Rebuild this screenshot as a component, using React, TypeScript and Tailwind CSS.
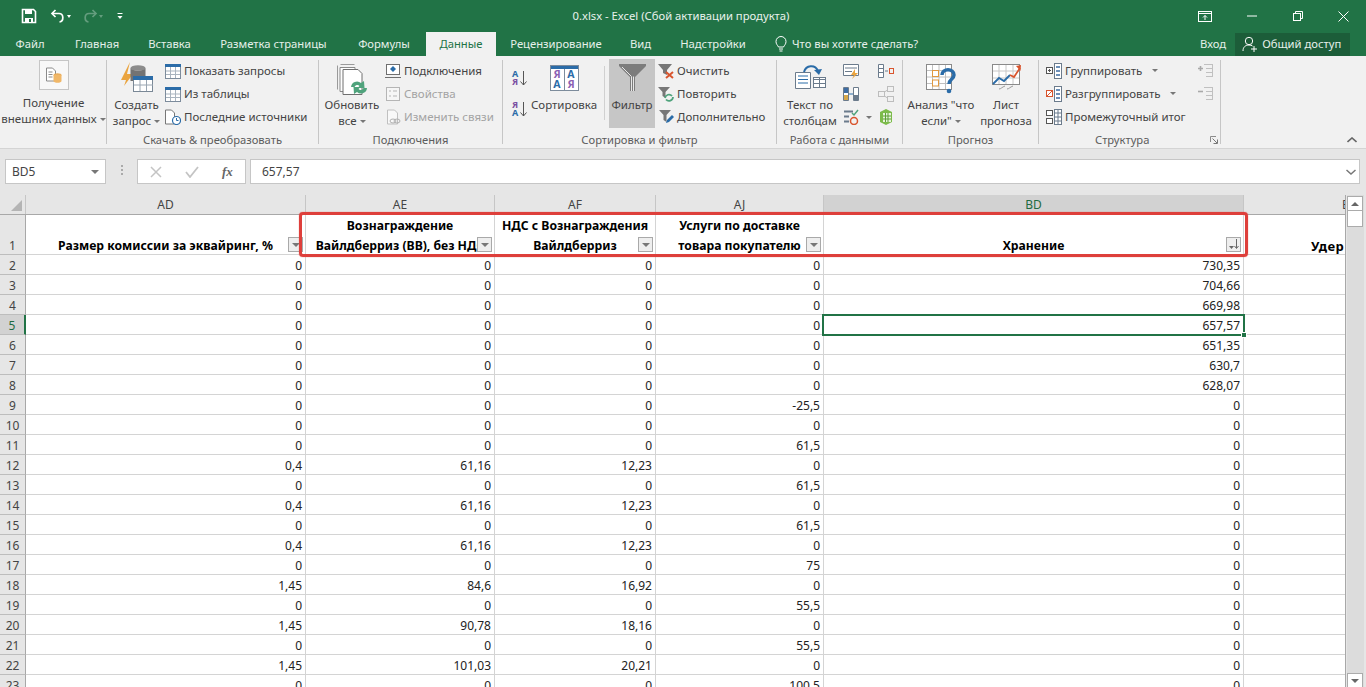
import type { ReactNode } from "react";

const FONT = "font-['Noto_Sans',sans-serif]";

type IconProps = { children: ReactNode; w?: number; h?: number; className?: string };

function Ico({ children, w = 16, h = 16, className = "" }: IconProps) {
  return (
    <svg width={w} height={h} viewBox={`0 0 ${w} ${h}`} fill="none" className={`shrink-0 ${className}`}>
      {children}
    </svg>
  );
}

function Caret({ className = "" }: { className?: string }) {
  return <span className={`inline-block h-0 w-0 border-x-[3px] border-t-[3px] border-x-transparent border-t-[#777] ${className}`} />;
}

function TitleBar() {
  return (
    <div className="flex h-8 items-center bg-[#217346] text-white">
      <div className="flex w-[150px] items-center pl-[21px]">
        <Ico w={16} h={16}>
          <path d="M1.5 1.5h11l2 2v11h-13z" stroke="#fff" strokeWidth="1.6" />
          <rect x="4" y="2" width="7" height="4" fill="#fff" />
          <rect x="4" y="10" width="8" height="5" fill="#fff" />
          <rect x="8" y="11" width="2" height="3" fill="#217346" />
        </Ico>
        <Ico w={16} h={16} className="ml-[13px]">
          <path d="M5.5 2 2 5.5 5.5 9" stroke="#fff" strokeWidth="1.7" />
          <path d="M2.5 5.5h6.5c5 0 5 8 .5 8.5" stroke="#fff" strokeWidth="1.7" />
        </Ico>
        <span className="ml-[1px] h-0 w-0 border-x-[2.5px] border-t-[3px] border-x-transparent border-t-white" />
        <Ico w={16} h={16} className="ml-[11px] opacity-30">
          <path d="M10.5 2 14 5.5 10.5 9" stroke="#fff" strokeWidth="1.7" />
          <path d="M13.5 5.5H7c-5 0-5 8-.5 8.5" stroke="#fff" strokeWidth="1.7" />
        </Ico>
        <span className="ml-[1px] h-0 w-0 border-x-[2.5px] border-t-[3px] border-x-transparent border-t-white opacity-30" />
        <Ico w={6} h={8} className="ml-[14px]">
          <path d="M0.5 1.5h5" stroke="#fff" />
          <path d="M0.5 4h5L3 7z" fill="#fff" />
        </Ico>
      </div>
      <div className="w-[1062px] text-center text-[11.25px] text-[#e8f1ec]">0.xlsx - Excel (Сбой активации продукта)</div>
      <div className="flex flex-1 items-center justify-between pr-[17px]">
        <Ico w={14} h={11} className="-ml-[14px]">
          <rect x="0.5" y="0.5" width="13" height="10" stroke="#fff" />
          <path d="M0 2.5h14" stroke="#fff" />
          <path d="M7 9V4.5M5 6.5l2-2 2 2" stroke="#fff" />
        </Ico>
        <Ico w={10} h={2}>
          <path d="M0 1h10" stroke="#fff" />
        </Ico>
        <Ico w={10} h={10}>
          <rect x="0.5" y="2.5" width="7" height="7" stroke="#fff" />
          <path d="M2.5 2.5v-2h7v7h-2" stroke="#fff" />
        </Ico>
        <Ico w={11} h={11}>
          <path d="m0.5 0.5 10 10M10.5 0.5l-10 10" stroke="#fff" />
        </Ico>
      </div>
    </div>
  );
}

const TABS: [string, string][] = [
  ["Файл", "w-[60px]"],
  ["Главная", "w-[74px]"],
  ["Вставка", "w-[71px]"],
  ["Разметка страницы", "w-[137px]"],
  ["Формулы", "w-[84px]"],
];
const TABS_AFTER: [string, string][] = [
  ["Рецензирование", "w-[120px]"],
  ["Вид", "w-[49px]"],
  ["Надстройки", "w-[96px]"],
];

function TabBar() {
  return (
    <div className="flex h-6 items-center bg-[#217346] text-[11.25px] text-[#e6f0ea]">
      {TABS.map(([name, w]) => (
        <div key={name} className={`${w} whitespace-nowrap text-center`}>
          {name}
        </div>
      ))}
      <div className="flex h-6 w-[70px] items-center justify-center bg-[#f1f1f1] text-[#217346]">Данные</div>
      {TABS_AFTER.map(([name, w]) => (
        <div key={name} className={`${w} whitespace-nowrap text-center`}>
          {name}
        </div>
      ))}
      <div className="flex w-[439px] items-center pl-[14px]">
        <Ico w={12} h={16}>
          <path d="M3.5 11C2.5 9 1 8.2 1 5.5a5 5 0 0 1 10 0C11 8.2 9.500 9 8.500 11z" stroke="#fff" />
          <path d="M4 13h4M4.500 15h3" stroke="#fff" />
        </Ico>
        <span className="ml-[5px] whitespace-nowrap">Что вы хотите сделать?</span>
      </div>
      <span className="whitespace-nowrap">Вход</span>
      <div className="ml-[9px] flex h-[23px] w-[115px] items-center whitespace-nowrap bg-[#1c5d39] pl-[7px]">
        <Ico w={16} h={16} className="mr-[4px]">
          <circle cx="7" cy="5" r="3.700" stroke="#fff" />
          <path d="M1 15c0-4 2.500-6 6-6 1.500 0 2.500.4 3.500 1" stroke="#fff" />
          <path d="M9 13h6M12 10v6" stroke="#fff" />
        </Ico>
        Общий доступ
      </div>
    </div>
  );
}

function Group({ w, label, children, labelClass = "justify-center", launcher = false }: { w: string; label: string; children: ReactNode; labelClass?: string; launcher?: boolean }) {
  return (
    <div className={`${w} flex h-[84px] shrink-0 flex-col border-r border-[#c6c6c6]`}>
      <div className="flex h-[72px]">{children}</div>
      <div className={`flex h-3 items-start ${labelClass}`}>
        <span className="text-[11.2px] leading-4 whitespace-nowrap text-[#5c5c5c]">{label}</span>
        {launcher && (
          <Ico w={8} h={8} className="ml-[61px] mt-[4px]">
            <path d="M0.500 6V.5H6" stroke="#8a8a8a" />
            <path d="M2.500 2.500 7 7M7.500 3.500v4h-4" stroke="#777" />
          </Ico>
        )}
      </div>
    </div>
  );
}

function BigBtn({ w, icon, lines, caret, top = "pt-[4px]", iconH = "h-[33px]" }: { w: string; icon: ReactNode; lines: string[]; caret?: boolean; top?: string; iconH?: string }) {
  return (
    <div className={`${w} flex shrink-0 flex-col items-center ${top}`}>
      <div className={`flex ${iconH} items-start justify-center`}>{icon}</div>
      <div className="text-center text-[11.5px] leading-4 whitespace-nowrap text-[#444]">
        {lines.map((line, i) => (
          <div key={line} className="flex items-center justify-center">
            {line}
            {caret && i === lines.length - 1 && <Caret className="ml-[3px]" />}
          </div>
        ))}
      </div>
    </div>
  );
}

function SmallRow({ icon, text, gray = false, caretGap }: { icon: ReactNode; text: string; gray?: boolean; caretGap?: string }) {
  return (
    <div className={`flex h-[23px] items-center text-[11.5px] whitespace-nowrap ${gray ? "text-[#a3a3a3]" : "text-[#444]"}`}>
      <span className="flex w-[19px] shrink-0 items-center">{icon}</span>
      {text}
      {caretGap && <Caret className={caretGap} />}
    </div>
  );
}

const BLUE = "#2b6ca8";

function TableIcon({ head = BLUE }: { head?: string }) {
  return (
    <Ico>
      <rect x="0.500" y="1.500" width="15" height="14" fill="#fff" stroke="#7d8c9c" />
      <rect x="0" y="1" width="16" height="3" fill={head} />
      <path d="M5.500 4v11M10.500 4v11M1 8h14M1 11.500h14" stroke="#a9b4bf" />
    </Ico>
  );
}

// small A/Я sort button: two stacked letters and a down arrow
function SortSmall({ first, second, firstColor, secondColor }: { first: string; second: string; firstColor: string; secondColor: string }) {
  return (
    <div className="flex h-[17px] items-center">
      <div className="w-[8px] text-center text-[9px] leading-[8px] font-bold">
        <div className={firstColor}>{first}</div>
        <div className={secondColor}>{second}</div>
      </div>
      <Ico w={7} h={16} className="ml-[1px]">
        <path d="M3.500 1v14M.5 11.500l3 3.500 3-3.500" stroke="#555" />
      </Ico>
    </div>
  );
}

function SortBigCell({ letter, color }: { letter: string; color: string }) {
  return <div className={`flex h-[10px] items-center justify-center text-[10.5px] leading-[10px] font-bold ${color}`}>{letter}</div>;
}

function Ribbon() {
  return (
    <div className="flex h-[93px] border-b border-[#d4d4d4] bg-[#f1f1f1] pt-1">
      <Group w="w-[107px]" label="">
        <BigBtn
          w="w-full pl-px"
          top="pt-0"
          iconH="h-[35px]"
          lines={["Получение", "внешних данных"]}
          caret
          icon={
            <div className="flex h-[30px] w-[30px] items-center justify-center border border-[#c6c6c6] bg-[#f8f8f8]">
              <Ico w={16} h={17}>
                <path d="M0.500 1h6l3 3v10H.5z" fill="#fff" stroke="#8a8a8a" />
                <path d="M2.500 5h4M2.500 7.500h4M2.500 10h4" stroke="#8a8a8a" />
                <ellipse cx="11.500" cy="8" rx="4" ry="1.800" fill="#e9ad5c" />
                <path d="M7.500 8v6c0 2.400 8 2.400 8 0V8" fill="#f0b768" />
              </Ico>
            </div>
          }
        />
      </Group>
      <Group w="w-[212px]" label="Скачать & преобразовать">
        <BigBtn
          w="w-[57px] ml-[1px]"
          top="pt-[2px]"
          iconH="h-[35px]"
          lines={["Создать", "запрос"]}
          caret
          icon={
            <Ico w={34} h={32}>
              <path d="M10 0 1 18h5l-2 6 9-12H7z" fill="#eaa43f" />
              <ellipse cx="18" cy="6" rx="7.500" ry="2.800" fill="#8c8c8c" />
              <path d="M10.500 6v13h15V6c-2 3.500-13 3.500-15 0z" fill="#737373" />
              <rect x="13.500" y="14.500" width="19" height="15" fill="#fff" stroke="#7a8896" />
              <rect x="13" y="14" width="20" height="4" fill={BLUE} />
              <path d="M20 18v11M26.500 18v11M14 23h19" stroke="#9aa6b2" />
            </Ico>
          }
        />
        <div className="-mt-px flex flex-col">
          <SmallRow text="Показать запросы" icon={<TableIcon />} />
          <SmallRow text="Из таблицы" icon={<TableIcon />} />
          <SmallRow
            text="Последние источники"
            icon={
              <Ico>
                <path d="M.5 1h6l3 3v11H.500z" fill="#fff" stroke="#777" />
                <circle cx="11.500" cy="11.500" r="4" fill="#fff" stroke={BLUE} strokeWidth="1.200" />
                <path d="M11.500 9v2.500h2" stroke={BLUE} />
              </Ico>
            }
          />
        </div>
      </Group>
      <Group w="w-[184px]" label="Подключения">
        <BigBtn
          w="w-[66px]"
          lines={["Обновить", "все"]}
          caret
          top="pt-[4px]"
          icon={
            <Ico w={34} h={32} className="ml-[3px]">
              <path d="M.5 1.500v24M3.500.5h14" stroke="#9a9a9a" />
              <path d="M3 3.500h15v24H3z" fill="#fff" stroke="#8a8a8a" />
              <path d="M6 5.500h15l4 4v21H6z" fill="#fff" stroke="#6f6f6f" />
              <path d="M14 23a6 6 0 0 1 10-4l3-2 .5 7h-7l2-2a3 3 0 0 0-5 1z" fill="#4fa37c" />
              <path d="M30 24a6 6 0 0 1-10 4l-3 2-.5-7h7l-2 2a3 3 0 0 0 5-1z" fill="#4fa37c" />
            </Ico>
          }
        />
        <div className="-mt-px flex flex-col">
          <SmallRow
            text="Подключения"
            icon={
              <Ico>
                <rect x="1.500" y="1.500" width="13" height="10" fill="#fff" stroke="#6f6f6f" />
                <path d="M0 14.500h16" stroke="#6f6f6f" />
                <path d="m8 3 3 3-3 3-3-3z" fill={BLUE} />
              </Ico>
            }
          />
          <SmallRow
            gray
            text="Свойства"
            icon={
              <Ico>
                <rect x="1.500" y="1.500" width="13" height="13" fill="#f6f6f6" stroke="#b5b5b5" />
                <path d="M4 5h2M8 5h4M4 10h2M8 10h4" stroke="#b5b5b5" />
              </Ico>
            }
          />
          <SmallRow
            gray
            text="Изменить связи"
            icon={
              <Ico>
                <path d="M2.500 1h7l3 3v11h-10z" fill="#f8f8f8" stroke="#c0c0c0" />
                <ellipse cx="8" cy="12" rx="3" ry="2" stroke="#b0b0b0" />
                <ellipse cx="12" cy="12" rx="3" ry="2" stroke="#b0b0b0" />
              </Ico>
            }
          />
        </div>
      </Group>
      <Group w="w-[274px]" label="Сортировка и фильтр">
        <div className="flex w-[28px] shrink-0 flex-col gap-[14px] pt-[9px] pl-[8px]">
          <SortSmall first="А" second="Я" firstColor="text-[#2b6ca8]" secondColor="text-[#7a4fa3]" />
          <SortSmall first="Я" second="А" firstColor="text-[#7a4fa3]" secondColor="text-[#2b6ca8]" />
        </div>
        <div className="flex w-[66px] shrink-0 flex-col items-center pt-[5px]">
          <div className="w-[29px] border border-[#7d8c9c] bg-white">
            <div className="h-[3px] bg-[#2b6ca8]" />
            <div className="flex h-[21px]">
              <div className="flex-1 border-r border-[#7d8c9c]">
                <SortBigCell letter="Я" color="text-[#8a5fb3]" />
                <SortBigCell letter="А" color="text-[#2b6ca8]" />
              </div>
              <div className="flex-1">
                <SortBigCell letter="А" color="text-[#2b6ca8]" />
                <SortBigCell letter="Я" color="text-[#8a5fb3]" />
              </div>
            </div>
          </div>
          <span className="mt-[6px] text-[11.5px] leading-4 text-[#444]">Сортировка</span>
        </div>
        <div className="mt-[6px] ml-[7px] h-[54px] w-px shrink-0 bg-[#d0d0d0]" />
        <div className="-mt-[1px] ml-[4px] flex h-[69px] w-[46px] shrink-0 flex-col items-center bg-[#c6c6c6] pt-[5px]">
          <Ico w={27} h={27}>
            <path d="M0 0h27v2L16 13v14h-5V13L0 2z" fill="#7c7c7c" />
            <path d="M12.500 27V12.500L3 3M14.500 27V12.500" stroke="#e8e8e8" />
          </Ico>
          <span className="mt-[6px] text-[11.5px] leading-4 text-[#444]">Фильтр</span>
        </div>
        <div className="-mt-px ml-[3px] flex flex-col">
          <SmallRow
            text="Очистить"
            icon={
              <Ico>
                <path d="M0 1h14L9 7v5L5 10V7z" fill="#777" />
                <path d="m8 9 7 6M15 9l-7 6" stroke="#d9552e" strokeWidth="2" />
              </Ico>
            }
          />
          <SmallRow
            text="Повторить"
            icon={
              <Ico>
                <path d="M0 1h12L7.500 6v6L4.500 10V6z" fill="#777" />
                <path d="M7 12a4 4 0 0 1 7-2M15 11a4 4 0 0 1-7 2.500" stroke="#4fa37c" strokeWidth="1.800" />
              </Ico>
            }
          />
          <SmallRow
            text="Дополнительно"
            icon={
              <Ico>
                <path d="M1 1h12L8.500 6v7L5.500 11V6z" fill="#777" />
                <path d="m8 14 1-3 5-5 2 2-5 5z" fill={BLUE} />
              </Ico>
            }
          />
        </div>
      </Group>
      <Group w="w-[126px]" label="Работа с данными">
        <BigBtn
          w="w-[66px]"
          lines={["Текст по", "столбцам"]}
          icon={
            <Ico w={31} h={26}>
              <path d="M.500 8.500h15v16H.5z" fill="#fff" stroke="#6b7b8c" />
              <path d="M3 12h10M3 15.500h10M3 19h10" stroke={BLUE} />
              <rect x="18.500" y="13.500" width="12" height="10" fill="#fff" stroke="#6b7b8c" />
              <path d="M18 15.500h13M24.500 14v9M18 19.500h13" stroke="#6b7b8c" />
              <path d="M9 8C11 1 20 0 23 7" stroke={BLUE} strokeWidth="2" />
              <path d="m19 6 5 5 3-6z" fill={BLUE} />
            </Ico>
          }
        />
        <div className="flex w-[35px] shrink-0 flex-col gap-[7px] pt-[3px]">
          <Ico>
            <path d="M.5 1.500h15v11H.5z" fill="#fff" stroke="#6b7b8c" />
            <path d="M2 5h12M2 8.500h7" stroke="#6b7b8c" />
            <path d="M12 6 8 12h3l-2 4 6-6h-3z" fill="#eaa43f" />
          </Ico>
          <Ico>
            <path d="M.5 1.500h5v13h-5zM10.500 1.500h5v13h-5z" fill="#fff" stroke="#6b7b8c" />
            <rect x="1" y="2" width="4" height="5" fill="#3d6ca3" />
            <rect x="1" y="9" width="4" height="5" fill="#d7a84a" />
            <path d="M6 8h4" stroke={BLUE} />
            <rect x="11" y="9" width="4" height="5" fill="#6b7b8c" />
          </Ico>
          <div className="flex items-center">
            <Ico>
              <path d="M1 2.500h9M1 7.500h5M1 12.500h5" stroke="#6b7b8c" strokeWidth="2" />
              <path d="m9 4 2 2 4-5" stroke="#4fa37c" strokeWidth="1.500" />
              <circle cx="11" cy="12" r="3.500" stroke="#d9552e" strokeWidth="1.500" />
            </Ico>
            <Caret className="ml-[7px]" />
          </div>
        </div>
        <div className="flex flex-col gap-[7px] pt-[3px]">
          <Ico>
            <path d="M.5 1.500h5v13h-5z" fill="#fff" stroke="#6b7b8c" />
            <path d="M1 5.500h4M1 9.500h4M7 8h3" stroke="#6b7b8c" />
            <rect x="11.500" y="5.500" width="4" height="5" stroke="#d9552e" />
          </Ico>
          <Ico className="opacity-50">
            <rect x="9.500" y=".5" width="6" height="5" stroke="#8a8a8a" />
            <rect x=".5" y="5.500" width="6" height="5" stroke="#8a8a8a" />
            <rect x="9.500" y="10.500" width="6" height="5" stroke="#8a8a8a" />
            <path d="m6.500 6 3-2M6.500 10l3 2" stroke="#8a8a8a" />
          </Ico>
          <Ico>
            <path d="M2 3 8 0l6 3v10l-6 3-6-3z" fill="#7cbb4a" />
            <rect x="5" y="4" width="8" height="9" fill="#e6f3da" />
            <path d="M7.500 4v9M10 4v9M5 7h8M5 10h8" stroke="#5da034" />
          </Ico>
        </div>
      </Group>
      <Group w="w-[136px]" label="Прогноз">
        <BigBtn
          w="w-[76px]"
          lines={["Анализ \"что", "если\""]}
          caret
          icon={
            <Ico w={30} h={30}>
              <rect x=".5" y=".5" width="25" height="25" fill="#fff" stroke="#8a8a8a" />
              <path d="M6.500 1v24M13 1v24M19.500 1v24M1 6.500h24M1 13h24M1 19.500h24" stroke="#c0c0c0" />
              <rect x="6.500" y="6.500" width="6" height="6" fill="#fff" stroke="#e0983f" />
              <rect x="6.500" y="16" width="6" height="6" fill="#fff" stroke="#e0983f" />
              <path d="M16 11c0-7 12-7 12 0 0 4-5 4-5 9" stroke={BLUE} strokeWidth="3.500" />
              <circle cx="23" cy="27" r="2.300" fill={BLUE} />
            </Ico>
          }
        />
        <BigBtn
          w="w-[54px]"
          lines={["Лист", "прогноза"]}
          icon={
            <Ico w={29} h={26}>
              <rect x=".5" y=".5" width="27" height="20" fill="#fff" stroke="#8a8a8a" />
              <path d="M7 1v19M14 1v19M21 1v19M1 7h26M1 14h26" stroke="#c8c8c8" />
              <path d="m1 20 6-6 5 3 6-6" stroke={BLUE} strokeWidth="1.800" />
              <path d="m18 11 4 2 6-9" stroke="#d9552e" strokeWidth="1.800" />
              <path d="m24 2 5-1-.5 6z" fill="#d9552e" />
              <path d="M7 25c2 0 3-2 6-3M15 25c2 0 3-2 6-3" stroke="#9a9a9a" />
            </Ico>
          }
        />
      </Group>
      <Group w="w-[182px]" label="Структура" labelClass="justify-start pl-[56px]" launcher>
        <div className="-mt-px flex flex-1 flex-col pl-[7px]">
          <SmallRow
            text="Группировать"
            caretGap="ml-[10px]"
            icon={
              <Ico>
                <rect x=".5" y="4.500" width="6" height="6" fill="#fff" stroke="#555" />
                <path d="M2 7.500h3M3.500 6v3" stroke="#555" />
                <rect x="8.500" y=".5" width="7" height="15" fill="#fff" stroke="#6b7b8c" />
                <path d="M10 4h4M10 8h4M10 12h4" stroke="#3d6ca3" strokeWidth="1.500" />
              </Ico>
            }
          />
          <SmallRow
            text="Разгруппировать"
            caretGap="ml-[9px]"
            icon={
              <Ico>
                <rect x=".5" y="4.500" width="6" height="6" fill="#fff" stroke="#d9552e" />
                <path d="m1 10 5-5" stroke="#d9552e" />
                <rect x="8.500" y=".5" width="7" height="15" fill="#fff" stroke="#6b7b8c" />
                <path d="M10 4h4M10 8h4M10 12h4" stroke="#3d6ca3" strokeWidth="1.500" />
              </Ico>
            }
          />
          <SmallRow
            text="Промежуточный итог"
            icon={
              <Ico>
                <rect x=".5" y="1.500" width="6" height="5" fill="#fff" stroke="#555" />
                <rect x=".5" y="9.500" width="6" height="5" fill="#fff" stroke="#555" />
                <rect x="8.500" y=".5" width="7" height="15" fill="#fff" stroke="#6b7b8c" />
                <path d="M12 1v14M9 4h6M9 8h6M9 12h6" stroke="#6b7b8c" />
              </Ico>
            }
          />
        </div>
        <div className="flex w-[22px] shrink-0 flex-col gap-[7px] pt-[3px]">
          <Ico>
            <path d="M0 5.500h5M2.500 3v5" stroke="#a9a9a9" strokeWidth="1.600" />
            <path d="M6 1.500h8M8 5.500h6M8 9.500h6M8 13.500h6M14.500 1v13" stroke="#c0c0c0" />
          </Ico>
          <Ico>
            <path d="M0 5.500h5" stroke="#a9a9a9" strokeWidth="1.600" />
            <path d="M6 1.500h8M8 5.500h6M8 9.500h6M8 13.500h6M14.500 1v13" stroke="#c0c0c0" />
          </Ico>
        </div>
      </Group>
      <div className="flex flex-1 items-end justify-end pr-[9px] pb-[5px]">
        <Ico w={10} h={6}>
          <path d="m.5 5 4.500-4 4.500 4" stroke="#666" strokeWidth="1.600" />
        </Ico>
      </div>
    </div>
  );
}

function FormulaBar() {
  return (
    <div className="flex h-[46px] items-start bg-[#e6e6e6] pt-[10px] pl-[5px] text-[12px] text-[#444]">
      <div className="flex h-[25px] w-[101px] items-center justify-between border border-[#c6c6c6] bg-white pt-px pr-[6px] pl-[6px]">
        BD5
        <span className="h-0 w-0 border-x-[4px] border-t-[4px] border-x-transparent border-t-[#777]" />
      </div>
      <div className="flex w-[31px] flex-col items-center gap-[2px] pt-[6px]">
        <span className="h-[2px] w-[2px] bg-[#aaa]" />
        <span className="h-[2px] w-[2px] bg-[#aaa]" />
        <span className="h-[2px] w-[2px] bg-[#aaa]" />
      </div>
      <div className="flex h-[25px] w-[109px] items-center border border-[#c6c6c6] bg-white">
        <Ico w={12} h={12} className="ml-[12px]">
          <path d="m1 1 10 10M11 1 1 11" stroke="#c4c4c4" strokeWidth="1.500" />
        </Ico>
        <Ico w={14} h={12} className="ml-[23px]">
          <path d="m1 6 4 5 8-10" stroke="#c4c4c4" strokeWidth="1.800" />
        </Ico>
        <span className="ml-[23px] font-['Liberation_Serif',serif] text-[13px] font-bold italic text-[#666]">fx</span>
      </div>
      <div className="ml-[4px] flex h-[25px] w-[1110px] items-center justify-between border border-[#c6c6c6] bg-white pt-px pr-[3px] pl-[11px]">
        657,57
        <Ico w={10} h={6}>
          <path d="m.5 1 4.500 4 4.500-4" stroke="#777" strokeWidth="1.500" />
        </Ico>
      </div>
    </div>
  );
}

const COLS = [
  { name: "AD", w: "w-[280px]" },
  { name: "AE", w: "w-[189px]" },
  { name: "AF", w: "w-[161px]" },
  { name: "AJ", w: "w-[168px]" },
  { name: "BD", w: "w-[420px]" },
];

const ROWS: [number, string, string, string, string, string][] = [
  [2, "0", "0", "0", "0", "730,35"],
  [3, "0", "0", "0", "0", "704,66"],
  [4, "0", "0", "0", "0", "669,98"],
  [5, "0", "0", "0", "0", "657,57"],
  [6, "0", "0", "0", "0", "651,35"],
  [7, "0", "0", "0", "0", "630,7"],
  [8, "0", "0", "0", "0", "628,07"],
  [9, "0", "0", "0", "-25,5", "0"],
  [10, "0", "0", "0", "0", "0"],
  [11, "0", "0", "0", "61,5", "0"],
  [12, "0,4", "61,16", "12,23", "0", "0"],
  [13, "0", "0", "0", "61,5", "0"],
  [14, "0,4", "61,16", "12,23", "0", "0"],
  [15, "0", "0", "0", "61,5", "0"],
  [16, "0,4", "61,16", "12,23", "0", "0"],
  [17, "0", "0", "0", "75", "0"],
  [18, "1,45", "84,6", "16,92", "0", "0"],
  [19, "0", "0", "0", "55,5", "0"],
  [20, "1,45", "90,78", "18,16", "0", "0"],
  [21, "0", "0", "0", "55,5", "0"],
  [22, "1,45", "101,03", "20,21", "0", "0"],
  [23, "0", "0", "0", "100,5", "0"],
];

function FilterBtn({ sorted = false }: { sorted?: boolean }) {
  return (
    <div className="absolute right-[2px] bottom-[2px] flex h-[15px] w-[15px] items-center justify-center border border-[#a9a9a9] bg-[#eeeeee]">
      {sorted ? (
        <Ico w={11} h={11}>
          <path d="M1 7h5L3.500 10z" fill="#666" />
          <path d="M8.500 0v9M6.500 7l2 2.500 2-2.500" stroke="#666" />
        </Ico>
      ) : (
        <span className="h-0 w-0 border-x-[4px] border-t-[4px] border-x-transparent border-t-[#777]" />
      )}
    </div>
  );
}

function HeadCell({ w, top, bottom, sorted }: { w: string; top?: string; bottom: string; sorted?: boolean }) {
  return (
    <div className={`${w} relative flex shrink-0 flex-col items-center justify-end overflow-hidden border-r border-b border-[#d4d4d4] text-center text-[12.2px] leading-5 font-bold whitespace-nowrap text-black`}>
      {top && <div>{top}</div>}
      <div className="-mb-[2px]">{bottom}</div>
      <FilterBtn sorted={sorted} />
    </div>
  );
}

function Sheet() {
  return (
    <div className="relative flex h-[492px] bg-[#e6e6e6]">
      <div className="w-[1346px] shrink-0 border-r border-[#a8a8a8]">
        <div className="flex h-[19px] text-[12px] text-[#444]">
          <div className="flex w-[26px] shrink-0 items-end justify-end border-r border-[#c6c6c6] pr-[3px] pb-[3px]">
            <span className="h-0 w-0 border-b-[11px] border-l-[11px] border-b-[#b4b4b4] border-l-transparent" />
          </div>
          {COLS.map((c) => (
            <div
              key={c.name}
              className={`${c.w} flex shrink-0 items-center justify-center border-r border-[#c6c6c6] pt-px ${c.name === "BD" ? "bg-[#d2d2d2] text-[#1e6b41]" : ""}`}
            >
              {c.name}
            </div>
          ))}
          <div className="flex flex-1 justify-end overflow-hidden pt-px leading-[17px]">
            <span className="w-[3px] overflow-hidden">B</span>
          </div>
        </div>
        <div className="flex h-[41px] border-t border-[#a8a8a8] bg-white">
          <div className="flex w-[26px] shrink-0 items-end justify-center overflow-hidden border-r border-b border-r-[#a8a8a8] border-b-[#bdbdbd] bg-[#e6e6e6] text-[12px] leading-5 text-[#444]">
            <span className="-mb-[2px]">1</span>
          </div>
          <HeadCell w="w-[280px]" bottom="Размер комиссии за эквайринг, %" />
          <HeadCell w="w-[189px]" top="Вознаграждение" bottom="Вайлдберриз (ВВ), без НДС" />
          <HeadCell w="w-[161px]" top="НДС с Вознаграждения" bottom="Вайлдберриз" />
          <HeadCell w="w-[168px]" top="Услуги по доставке" bottom="товара покупателю" />
          <HeadCell w="w-[420px]" bottom="Хранение" sorted />
          <div className="flex flex-1 items-end overflow-hidden border-b border-[#d4d4d4] pl-[67px] text-[13px] leading-5 font-bold tracking-[0.5px] whitespace-nowrap text-black">
            <span className="-mb-[2px]">Удер</span>
          </div>
        </div>
        {ROWS.map(([n, ...vals]) => (
          <div key={n} className="flex h-5 bg-white text-[12px] text-[#222]">
            <div className={`flex w-[26px] shrink-0 items-center justify-center border-r border-b border-b-[#bdbdbd] pt-[2px] ${n === 5 ? "border-r-2 border-r-[#217346] bg-[#d2d2d2] text-[#1e6b41]" : "border-r-[#a8a8a8] bg-[#e6e6e6] text-[#444]"}`}>{n}</div>
            {vals.map((v, i) => (
              <div key={i} className={`${COLS[i].w} flex shrink-0 items-center justify-end border-r border-b border-[#d4d4d4] pt-[2px] pr-[3px]`}>
                {v}
              </div>
            ))}
            <div className="flex-1 border-b border-[#d4d4d4]" />
          </div>
        ))}
      </div>
      <div className="flex w-[20px] shrink-0 flex-col pl-px">
        <div className="flex h-[492px] w-[17px] flex-col bg-[#dcdcdc]">
          <div className="mt-px flex h-[15px] w-[16px] items-center justify-center border border-[#ababab] bg-white">
            <span className="h-0 w-0 border-x-[4px] border-b-[4px] border-x-transparent border-b-[#666]" />
          </div>
          <div className="h-[16px] w-[16px] border border-t-0 border-[#ababab] bg-white" />
          <div className="flex-1" />
          <div className="flex h-[14px] w-[16px] items-center justify-center border border-b-0 border-[#ababab] bg-white">
            <span className="h-0 w-0 border-x-[4px] border-t-[4px] border-x-transparent border-t-[#666]" />
          </div>
        </div>
      </div>
      {/* red annotation frame drawn over the header row */}
      <div className="pointer-events-none absolute top-[17px] left-[299px] h-[45px] w-[949px] rounded-[4px] border-[3px] border-[#de3f3b] shadow-[0_0_1px_#de3f3b]" />
      {/* active cell */}
      <div className="pointer-events-none absolute top-[119px] left-[822px] h-[22px] w-[423px] border-2 border-[#217346]">
        <span className="absolute right-[-4px] bottom-[-4px] h-[6px] w-[6px] border border-white bg-[#217346]" />
      </div>
    </div>
  );
}

export default function App() {
  return (
    <div className={`h-[687px] w-[1366px] overflow-hidden bg-[#e6e6e6] ${FONT}`}>
      <TitleBar />
      <TabBar />
      <Ribbon />
      <FormulaBar />
      <Sheet />
    </div>
  );
}
